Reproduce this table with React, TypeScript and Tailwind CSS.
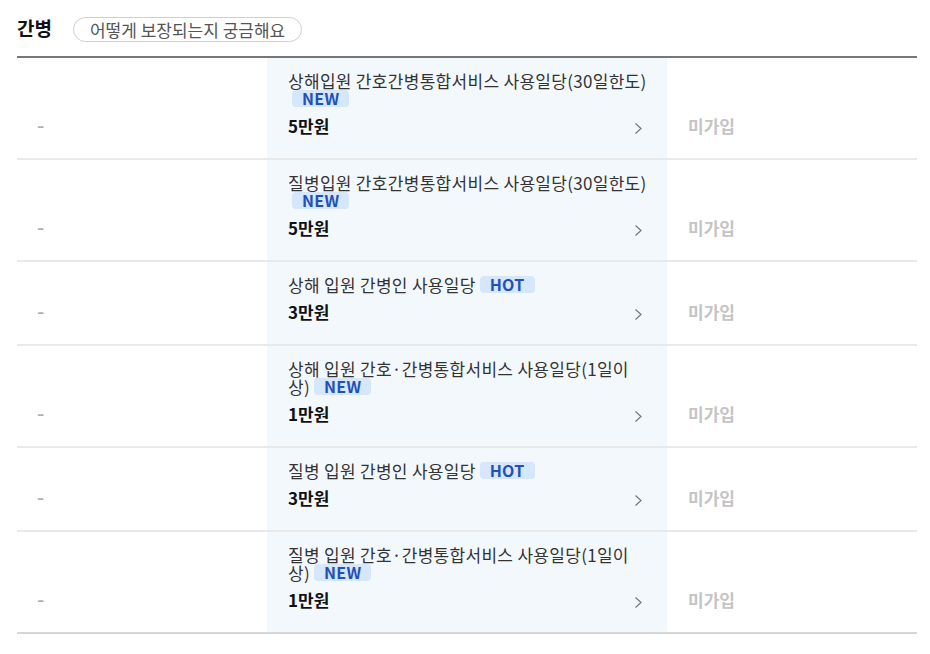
import React from "react";

type Badge = "NEW" | "HOT";

interface CoverageRow {
  lines: string[];
  badge: Badge;
  badgeOwnLine?: boolean;
  amount: string;
}

const rows: CoverageRow[] = [
  { lines: ["상해입원 간호간병통합서비스 사용일당(30일한도)"], badge: "NEW", badgeOwnLine: true, amount: "5만원" },
  { lines: ["질병입원 간호간병통합서비스 사용일당(30일한도)"], badge: "NEW", badgeOwnLine: true, amount: "5만원" },
  { lines: ["상해 입원 간병인 사용일당"], badge: "HOT", amount: "3만원" },
  { lines: ["상해 입원 간호·간병통합서비스 사용일당(1일이", "상)"], badge: "NEW", amount: "1만원" },
  { lines: ["질병 입원 간병인 사용일당"], badge: "HOT", amount: "3만원" },
  { lines: ["질병 입원 간호·간병통합서비스 사용일당(1일이", "상)"], badge: "NEW", amount: "1만원" },
];

const font = { fontFamily: '"Noto Sans CJK KR", "Noto Sans", sans-serif' };

const Tag: React.FC<{ label: Badge; className?: string }> = ({ label, className }) => (
  <span
    className={`inline-block align-top rounded-[4px] bg-[#D6E6FB] px-[10px] text-[16px] font-bold leading-[17px] tracking-[0.3px] text-[#2150B8] ${className ?? ""}`}
  >
    {label}
  </span>
);

const Chevron = () => (
  <svg width="9" height="13" viewBox="0 0 9 13" fill="none" className="mt-[5px] shrink-0">
    <path d="M1.5 1.5L7 6.5L1.5 11.5" stroke="#777" strokeWidth="1.2" />
  </svg>
);

export default function App() {
  return (
    <div className="min-h-screen bg-white" style={font}>
      <div className="ml-[17px] w-[900px]">
        {/* header */}
        <div className="flex h-[56px] items-center gap-[21px]">
          <h2 className="text-[19px] font-bold text-[#111]">간병</h2>
          <button
            type="button"
            className="mt-[3px] h-[25px] rounded-full border-[1.5px] border-[#CFCFCF] px-[16px] text-[17px] leading-[20px] text-[#555]"
          >
            어떻게 보장되는지 궁금해요
          </button>
        </div>

        <div className="border-t-2 border-[#777]">
          {rows.map((row, i) => {
            const last = i === rows.length - 1;
            return (
              <div
                key={i}
                className={`flex ${last ? "border-b-2 border-[#D6D6D6]" : "border-b-2 border-[#E9E9E9]"}`}
              >
                <div className="flex w-[250px] items-end pb-[20px] pl-[20px]">
                  <span className="font-['Liberation_Sans',sans-serif] text-[22px] leading-[24px] text-[#AFAFAF]">-</span>
                </div>

                <div className="w-[400px] bg-[#F3F8FD] pb-[20px] pl-[21px] pr-[24px] pt-[14px]">
                  <div className="text-[17px] leading-[18px] tracking-[0.3px] text-[#333]">
                    {row.lines.map((line, j) => {
                      const isLast = j === row.lines.length - 1;
                      return (
                        <div key={j} className="whitespace-nowrap">
                          {line}
                          {isLast && !row.badgeOwnLine && <Tag label={row.badge} className="ml-[4px]" />}
                        </div>
                      );
                    })}
                    {row.badgeOwnLine && (
                      <div>
                        <Tag label={row.badge} className="ml-[4px]" />
                      </div>
                    )}
                  </div>
                  <div className="mt-[6px] flex items-center justify-between">
                    <span className="text-[17px] font-bold leading-[24px] text-[#111]">{row.amount}</span>
                    <Chevron />
                  </div>
                </div>

                <div className="flex w-[250px] items-end pb-[20px] pl-[21px]">
                  <span className="text-[17px] font-bold leading-[24px] text-[#C4C4C4]">미가입</span>
                </div>
              </div>
            );
          })}
        </div>
      </div>
    </div>
  );
}
